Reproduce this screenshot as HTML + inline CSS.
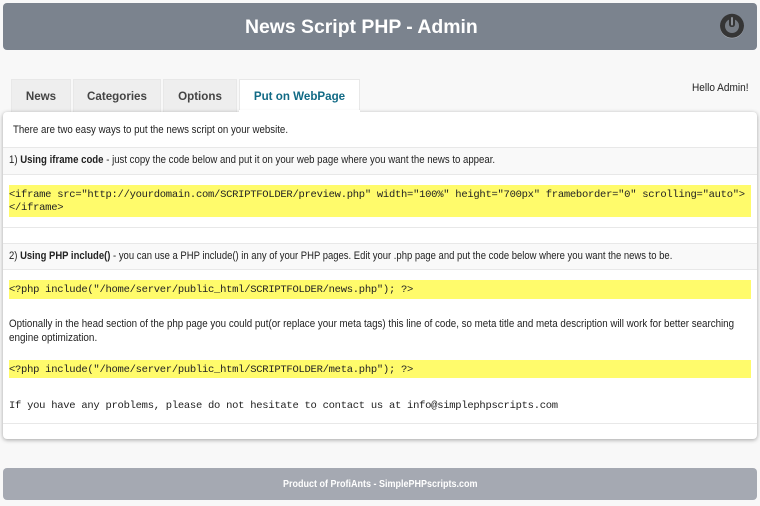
<!DOCTYPE html>
<html><head><meta charset="utf-8"><title>News Script PHP - Admin</title>
<style>
html,body{margin:0;padding:0}
body{width:760px;height:506px;position:relative;overflow:hidden;background:#f8f8f8;font-family:"Liberation Sans",sans-serif;font-size:10.6px;color:#222}
div{position:absolute;box-sizing:border-box;white-space:nowrap}
.tab{top:79px;height:33px;background:#eee;border:1px solid #e8e8e8;border-bottom:0;font-weight:bold;font-size:11.6px;color:#444;text-align:center;line-height:34px}
.line{left:3px;width:754px;height:1px;background:#e8e8e8}
.y{left:9px;width:742px;background:#fffb6b}
.m{left:9px;font-family:"Liberation Mono",monospace;font-size:10.5px;letter-spacing:-.27px;color:#222;line-height:13px}
.s{transform-origin:0 50%}
</style></head><body>
<div style="left:3px;top:3px;width:754px;height:47px;background:#7b838e;border-radius:4px"></div>
<div style="left:245px;top:3px;color:#fff;font-weight:bold;font-size:19.4px;line-height:48px">News Script PHP - Admin</div>
<svg style="position:absolute;left:719px;top:13px" width="26" height="26" viewBox="0 0 26 26">
<circle cx="13" cy="13.4" r="12" fill="#a9aeb5"/>
<circle cx="13" cy="12.8" r="12" fill="#353535"/>
<circle cx="13" cy="13" r="7" fill="#757b83"/>
<rect x="10" y="2" width="6" height="12" rx="2.6" fill="#353535"/>
<rect x="12" y="4" width="2" height="8.5" rx="1" fill="#8b9097"/>
</svg>
<div class="tab" style="left:11px;width:60px">News</div>
<div class="tab" style="left:73px;width:88px">Categories</div>
<div class="tab" style="left:163px;width:74px">Options</div>
<div class="tab" style="left:239px;width:121px;background:#fff;color:#116a85;height:34px">Put on WebPage</div>
<div class="s" style="left:692px;top:82px;line-height:13px;transform:scaleX(.95)">Hello Admin!</div>
<div style="left:3px;top:112px;width:754px;height:327px;background:#fff;border-radius:4px;box-shadow:0 1px 4px rgba(0,0,0,.35)"></div>
<div style="left:239px;top:110px;width:121px;height:4px;background:#fff"></div>
<div class="s" style="left:13px;top:124px;line-height:13px;transform:scaleX(.914)">There are two easy ways to put the news script on your website.</div>
<div style="left:3px;top:147px;width:754px;height:28px;background:#f9f9f9;border-top:1px solid #e8e8e8;border-bottom:1px solid #e8e8e8"></div>
<div class="s" style="left:9px;top:154px;line-height:13px;transform:scaleX(.907)">1) <b>Using iframe code</b> - just copy the code below and put it on your web page where you want the news to appear.</div>
<div class="y" style="top:185px;height:32px"></div>
<div class="m" style="top:189px">&lt;iframe src="http://yourdomain.com/SCRIPTFOLDER/preview.php" width="100%" height="700px" frameborder="0" scrolling="auto"&gt;<br>&lt;/iframe&gt;</div>
<div class="line" style="top:227px"></div>
<div style="left:3px;top:243px;width:754px;height:27px;background:#f9f9f9;border-top:1px solid #e8e8e8;border-bottom:1px solid #e8e8e8"></div>
<div class="s" style="left:9px;top:250px;line-height:13px;transform:scaleX(.894)">2) <b>Using PHP include()</b> - you can use a PHP include() in any of your PHP pages. Edit your .php page and put the code below where you want the news to be.</div>
<div class="y" style="top:280px;height:19px"></div>
<div class="m" style="top:284px">&lt;?php include("/home/server/public_html/SCRIPTFOLDER/news.php"); ?&gt;</div>
<div class="s" style="left:9px;top:317px;line-height:14px;transform:scaleX(.9216)">Optionally in the head section of the php page you could put(or replace your meta tags) this line of code, so meta title and meta description will work for better searching</div>
<div class="s" style="left:9px;top:331px;line-height:14px;transform:scaleX(.936)">engine optimization.</div>
<div class="y" style="top:360px;height:18px"></div>
<div class="m" style="top:364px">&lt;?php include("/home/server/public_html/SCRIPTFOLDER/meta.php"); ?&gt;</div>
<div class="m" style="top:400px">If you have any problems, please do not hesitate to contact us at info@simplephpscripts.com</div>
<div class="line" style="top:423px"></div>
<div style="left:3px;top:468px;width:754px;height:32px;background:#a5a9b2;border-radius:4px"></div>
<div class="s" style="left:283px;top:469px;color:#fff;font-weight:bold;font-size:10px;line-height:32px;transform:scaleX(.9)">Product of ProfiAnts - SimplePHPscripts.com</div>
</body></html>
